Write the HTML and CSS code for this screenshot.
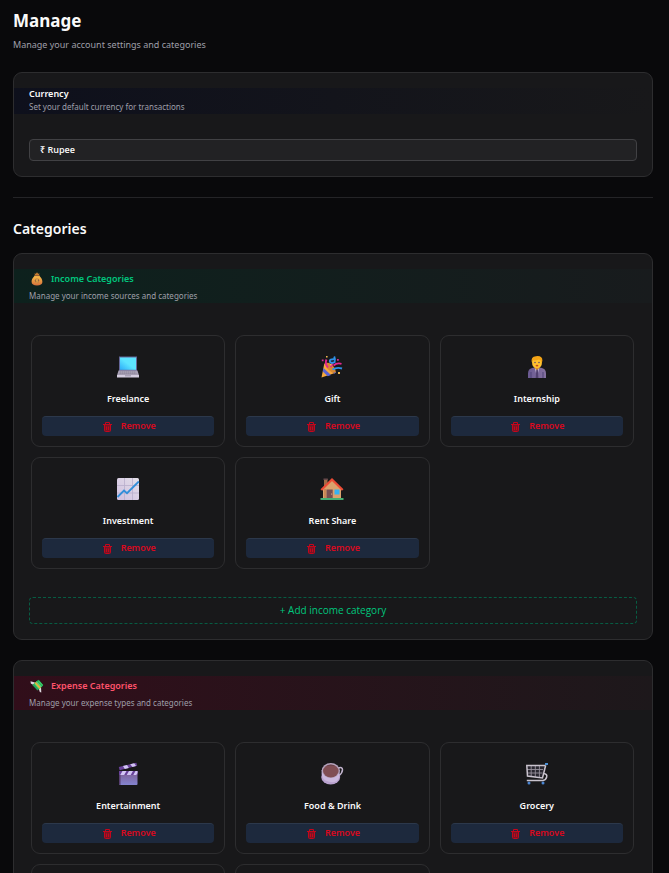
FILE: index.html
```html
<!DOCTYPE html>
<html lang="en">
<head>
<meta charset="utf-8">
<meta name="viewport" content="width=device-width, initial-scale=1">
<title>Manage</title>
<link rel="stylesheet" href="styles.css">
</head>
<body>
<svg class="defs" aria-hidden="true">
  <defs>
    <linearGradient id="screen" x1="1" y1="0" x2="0" y2="1"><stop offset="0.5" stop-color="#5ce4ff"/><stop offset="1" stop-color="#2cacf8"/></linearGradient>
    <linearGradient id="gold" x1="0" y1="0" x2="0" y2="1"><stop offset="0" stop-color="#ffc64a"/><stop offset="1" stop-color="#d5703c"/></linearGradient>
    <linearGradient id="paper" x1="1" y1="0" x2="0" y2="1"><stop offset="0" stop-color="#e4dfe9"/><stop offset="1" stop-color="#cfc0e0"/></linearGradient>
    <linearGradient id="slate" x1="0" y1="0" x2="0" y2="1"><stop offset="0" stop-color="#7d5b8e"/><stop offset="1" stop-color="#8484d0"/></linearGradient>
    <linearGradient id="suit" x1="0" y1="0" x2="1" y2="0"><stop offset="0" stop-color="#6a5a92"/><stop offset="1" stop-color="#85719f"/></linearGradient>
    <symbol id="trash" viewBox="0 0 9 10">
      <path d="M1.500 3h6v6h-6z" fill="#7a1424"/>
      <path d="M0 2.500h9M2.500 2V.5h4V2M1.500 3v5.500q0 1 1 1h4q1 0 1-1V3M3.500 4.500V8M5.500 4.500V8" fill="none" stroke="#c5061c"/>
    </symbol>
  </defs>
</svg>
<main class="page">
  <header class="page-head">
    <h1>Manage</h1>
    <p>Manage your account settings and categories</p>
  </header>

  <section class="card">
    <div class="strip strip-currency">
      <h3><label for="currency">Currency</label></h3>
      <p>Set your default currency for transactions</p>
    </div>
    <div class="currency-body">
      <select id="currency"><option>₹ Rupee</option></select>
    </div>
  </section>

  <hr>
  <h2>Categories</h2>

  <section class="card">
    <div class="strip strip-income">
      <h3>
        <svg class="mark" viewBox="0 0 14 14"><path d="M5 3 4.400 1.600l1.500.2L7 .2l1.100 1.600 1.500-.2L9 3z" fill="#c57c31"/><path d="M5.200 3h3.600c1 1.600 3.600 3.300 3.600 6.900 0 2.300-2 3.500-5.400 3.500s-5.400-1.200-5.400-3.500C1.600 6.300 4.200 4.600 5.200 3z" fill="url(#gold)"/><path d="M4.600 3.600h4.800" stroke="#8c5434"/><circle cx="7" cy="8.600" r="2.200" fill="#8d6041"/><path d="M8.300 7.300H6.500q-1 .1-.8.700.2.600 1.300.6t1.200.7q0 .7-1 .7H5.600M7 6.500v4.200" fill="none" stroke="#f6b64a" stroke-width=".7"/></svg>
        Income Categories
      </h3>
      <p>Manage your income sources and categories</p>
    </div>
    <div class="grid">
      <article class="category">
        <svg class="emoji" viewBox="0 0 24 24"><path d="M3 1.500h18V17H3z" fill="#646698"/><path d="M4 2.500h16v12.300H4z" fill="url(#screen)"/><path d="M2.500 15.500h19l1.500 5H1z" fill="#a8a0b5"/><path d="M4 17h16M3.500 18.600h17" stroke="#858096" stroke-width=".8" stroke-dasharray="1.300 .7"/><path d="M1 20h22v2.500H1z" fill="#d4cde0"/><path d="M9 20h6v1.500H9z" fill="#aaa2b8"/></svg>
        <h4>Freelance</h4>
        <button type="button"><svg viewBox="0 0 9 10"><use href="#trash"/></svg>Remove</button>
      </article>
      <article class="category">
        <svg class="emoji" viewBox="0 0 24 24"><path d="M1.500 22.500 4.300 8.500Q9 8.500 12.500 12.300t3.300 5.500z" fill="#f5a83e"/><path d="m3.500 13 7.500 7-3.200 1.200-5-4.600zM4.500 9.600l9.800 9.200 1.500-1z" fill="#5a64d4"/><ellipse cx="10.700" cy="12.700" rx="3" ry="6.300" transform="rotate(-43 10.700 12.700)" fill="#d98730"/><path d="M8 12.500Q4.500 8.500 6.500 4.500M13.500 10.500q3.500-3 8-1.700M10.500 12q2-2 1.500-4" fill="none" stroke="#e3268f" stroke-width="1.900"/><path d="M14 7.500q-4 .8-4.200-1.300T14 4.300M14.500 8q1.200-3.500-.3-6.500M12.500 14.500q4.500-2.700 9.500-1" fill="none" stroke="#2f91e8" stroke-width="1.900"/><path d="M6 1h1.600v1.600H6zM18 17h2v2h-2zM10 9h1.600v1.600H10z" fill="#edb850"/><path d="M1.800 4.500h1.800v1.800H1.800zM17 4h1.800v1.800H17z" fill="#d42c91"/></svg>
        <h4>Gift</h4>
        <button type="button"><svg viewBox="0 0 9 10"><use href="#trash"/></svg>Remove</button>
      </article>
      <article class="category">
        <svg class="emoji" viewBox="0 0 24 24"><path d="M3 23v-4.500q0-5 5-5.800l4-.8 4 .8q5 .8 5 5.800V23z" fill="url(#suit)"/><path d="m10 13 2 10 2-10z" fill="#d8cce5"/><path d="M11.300 14h1.500l.6 9h-2.700z" fill="#51406f"/><path d="M6 17v6M18 17v6" stroke="#4f4276"/><path d="M9.500 10h5v3L12 15l-2.500-2z" fill="#dd8d20"/><path d="M7 7q0-5 5-5t5 5q0 6-5 6T7 7z" fill="#ffc22f"/><path d="M6.800 7.500Q5.500 1.500 11 1.200q6.500-.8 6.400 4.500l-.7 2.200Q16 5 14 4.500 9 6 7.800 5z" fill="#f4a416"/><circle cx="10" cy="7.500" r=".8" fill="#64506b"/><circle cx="14" cy="7.500" r=".8" fill="#64506b"/><ellipse cx="12" cy="10.600" rx="1.400" ry=".9" fill="#c44c20"/></svg>
        <h4>Internship</h4>
        <button type="button"><svg viewBox="0 0 9 10"><use href="#trash"/></svg>Remove</button>
      </article>
      <article class="category">
        <svg class="emoji" viewBox="0 0 24 24"><rect x="1" y="1" width="22" height="22" rx="1.500" fill="url(#paper)"/><path d="M8.500 1v22M16.500 1v22M1 8.500h22M1 16h22" stroke="#b9aecb" stroke-width=".8"/><path d="m1.500 20 6.500-6.500 3 2.700L22.800 4.500" fill="none" stroke="#338fd9" stroke-width="1.800"/></svg>
        <h4>Investment</h4>
        <button type="button"><svg viewBox="0 0 9 10"><use href="#trash"/></svg>Remove</button>
      </article>
      <article class="category">
        <svg class="emoji" viewBox="0 0 24 24"><path d="M4 2h3.500v8H4z" fill="#a06c48"/><path d="M3.500 1.500h4.300V3H3.500z" fill="#68494a"/><path d="M3 11.500 12 3l9 8.500V22H3z" fill="#dba26d"/><path d="M4 12h2v10H4z" fill="#c88857"/><path d="m1.300 13 10.700-10.500L22.700 13" fill="none" stroke="#ed4c36" stroke-width="2.300"/><path d="M6.500 12.500h6.200V22H6.500z" fill="#785052"/><circle cx="11.600" cy="17" r=".6" fill="#f2c28c"/><path d="M14.500 12.500h5v5h-5z" fill="#34b2f5"/><path d="M.5 21h23v2H.5z" fill="#45ae73"/></svg>
        <h4>Rent Share</h4>
        <button type="button"><svg viewBox="0 0 9 10"><use href="#trash"/></svg>Remove</button>
      </article>
    </div>
    <button type="button" class="add">+ Add income category</button>
  </section>

  <section class="card">
    <div class="strip strip-expense">
      <h3>
        <svg class="mark" viewBox="0 0 14 14"><path d="M.5 2.300 5 3.500 3.500 6 .8 4.500zM8.500 9l2.500-1 .3 5.500-1.500-.6z" fill="#ded7df"/><path d="m2.300 6 6-5.200 4.900 5.600-5.700 5.200z" fill="#26a85a"/><path d="m4.500 4.300 5 5.500M6.300 2.700l5 5.300" stroke="#57dc7c" stroke-width="1.200"/><path d="m4.600 4 1.300-1.100 5 5.600-1.400 1.200z" fill="#eab33e"/><path d="m9 1.200 4.200 4.700-1 .9-4.300-4.600z" fill="#37c965"/></svg>
        Expense Categories
      </h3>
      <p>Manage your expense types and categories</p>
    </div>
    <div class="grid">
      <article class="category">
        <svg class="emoji" viewBox="0 0 24 24"><path d="M3 9h18.500v13q0 1-1 1H4q-1 0-1-1z" fill="url(#slate)"/><path d="M3 9h18.500v4H3z" fill="#69429a"/><path d="m6.500 9h4l-2.300 4h-4zM13 9h4l-2.300 4h-4zM19.500 9h2v2l-1.200 2h-3z" fill="#d2c5f4"/><path d="m2.800 5 17.500-4.300.9 3L3.600 8.300z" fill="#69429a"/><path d="m7 4 4-1 1.800 2.900-4 1zM14.200 2.200l4-1L20 4l-3.500.9z" fill="#d2c5f4"/><path d="M3 13h1.500v10H4q-1 0-1-1z" fill="#563e6f"/></svg>
        <h4>Entertainment</h4>
        <button type="button"><svg viewBox="0 0 9 10"><use href="#trash"/></svg>Remove</button>
      </article>
      <article class="category">
        <svg class="emoji" viewBox="0 0 24 24"><path d="M18 6q4.500-1.500 4.500 1.700T18.500 14" fill="none" stroke="#c2b4ce" stroke-width="1.500"/><ellipse cx="10.700" cy="15" rx="9.500" ry="7.500" fill="#b9a2cf"/><path d="M1.600 8h18q.5 9.500-3.500 11.400T5.500 18.500Q1 16 1.600 8z" fill="#cbb8dd"/><ellipse cx="10.800" cy="8.500" rx="9" ry="7.500" fill="#b5a3bd"/><ellipse cx="10.800" cy="9" rx="7.800" ry="6.500" fill="#804e54"/><path d="M6 3.800q4.800-2.300 9.600 0-4.600-.7-9.600 0" fill="#5e3e48"/></svg>
        <h4>Food &amp; Drink</h4>
        <button type="button"><svg viewBox="0 0 9 10"><use href="#trash"/></svg>Remove</button>
      </article>
      <article class="category">
        <svg class="emoji" viewBox="0 0 24 24"><path d="M2 4h18l-2.800 12.500L2.500 14z" fill="#292730"/><path d="M6.200 4v10.500M10.300 4v11M14.400 4v11.500M2 7.500h16M2.500 11h15" stroke="#96919c" stroke-width=".9"/><path d="M20.200 3.500H1.800L2.500 14l15 2 3.200-12.800M18.500 11.500q4 .5 3.200 3.500T18 18.500H1.800" fill="none" stroke="#c9c3ce" stroke-width="1.500"/><path d="M20 1h3v2h-3z" fill="#4a91d8"/><circle cx="4" cy="21" r="1.500" fill="#4a85d2"/><circle cx="18" cy="21" r="1.500" fill="#4a85d2"/></svg>
        <h4>Grocery</h4>
        <button type="button"><svg viewBox="0 0 9 10"><use href="#trash"/></svg>Remove</button>
      </article>
      <article class="category"></article>
      <article class="category"></article>
    </div>
  </section>
</main>
</body>
</html>
```
FILE: styles.css
```css
* { box-sizing: border-box; }

body {
  margin: 0;
  background: #09090b;
  color: #fafafa;
  font-family: "Noto Sans", "Open Sans", sans-serif;
  font-size: 9px;
}

h1, h2, h3, h4, p { margin: 0; }

.defs { position: absolute; width: 0; height: 0; }

.page {
  height: 100vh;
  overflow-y: auto;
  scrollbar-width: none;
  padding: 9px 16px 0 13px;
}

.page-head { margin-bottom: 20px; }
h1 { font-size: 17px; line-height: 24px; font-weight: 700; }
.page-head p {
  margin-top: 5px;
  font-size: 9px;
  line-height: 14px;
  color: #9f9fa9;
}

h2 {
  margin-bottom: 12px;
  font-size: 14px;
  line-height: 24px;
  font-weight: 600;
}

hr {
  height: 1px;
  margin: 20px 0 19px;
  border: 0;
  background: #242427;
}

.card {
  padding: 15px 0;
  border: 1px solid #2d2d2f;
  border-radius: 9px;
  background: #18181a;
}
.card + .card { margin-top: 20px; }

.strip { padding: 0 15px; }
.strip h3 { font-size: 9px; font-weight: 600; line-height: 12px; }
.strip p { font-size: 8px; line-height: 14px; color: #9f9fa9; }
.strip-currency { background: linear-gradient(90deg, #0e101c, #18181a); }
.strip-income { background: linear-gradient(90deg, #0d211d, #181b1d); }
.strip-expense { background: linear-gradient(90deg, #310e1a, #1d181b); }

.strip-income h3, .strip-expense h3 {
  display: flex;
  align-items: center;
  gap: 7px;
  line-height: 19px;
}
.strip-income p, .strip-expense p { line-height: 15px; }
.strip-income h3 { color: #00c77d; }
.strip-expense h3 { color: #ff536b; }
.mark { width: 14px; height: 14px; margin-left: 1px; }

.currency-body { padding: 25px 15px 0; }
select {
  display: block;
  width: 100%;
  height: 22px;
  padding: 0 10px 1px;
  appearance: none;
  border: 1px solid #414144;
  border-radius: 4px;
  background: #222224;
  color: #fafafa;
  font: 600 9px "Open Sans", "Noto Sans", sans-serif;
}

.grid {
  display: grid;
  grid-template-columns: repeat(3, 1fr);
  gap: 10px;
  padding: 32px 18px 28px 17px;
}

.category {
  display: flex;
  flex-direction: column;
  align-items: center;
  min-height: 112px;
  padding: 10px;
  border: 1px solid #2d2d2f;
  border-radius: 9px;
}
.emoji { width: 24px; height: 24px; margin-top: 9px; }
.category h4 {
  margin: 13px 0 10px;
  font-size: 9px;
  font-weight: 600;
  line-height: 14px;
}

button { font-family: "Open Sans", sans-serif; cursor: pointer; }
.category button {
  display: flex;
  align-items: center;
  justify-content: center;
  gap: 9px;
  width: 100%;
  height: 20px;
  padding: 0 0 2px 2px;
  border: 0;
  border-top: 1px solid #2c384b;
  border-radius: 4px;
  background: #1d293d;
  color: #e0071c;
  font-size: 9px;
  font-weight: 600;
}
.category button svg { width: 9px; height: 10px; margin-top: 2px; }

.add {
  display: block;
  width: calc(100% - 30px);
  height: 27px;
  margin: 0 15px;
  padding: 0 0 2px;
  border: 1px dashed #075c43;
  border-radius: 4px;
  background: transparent;
  color: #00c77d;
  font-size: 10px;
  font-weight: 500;
}
```
